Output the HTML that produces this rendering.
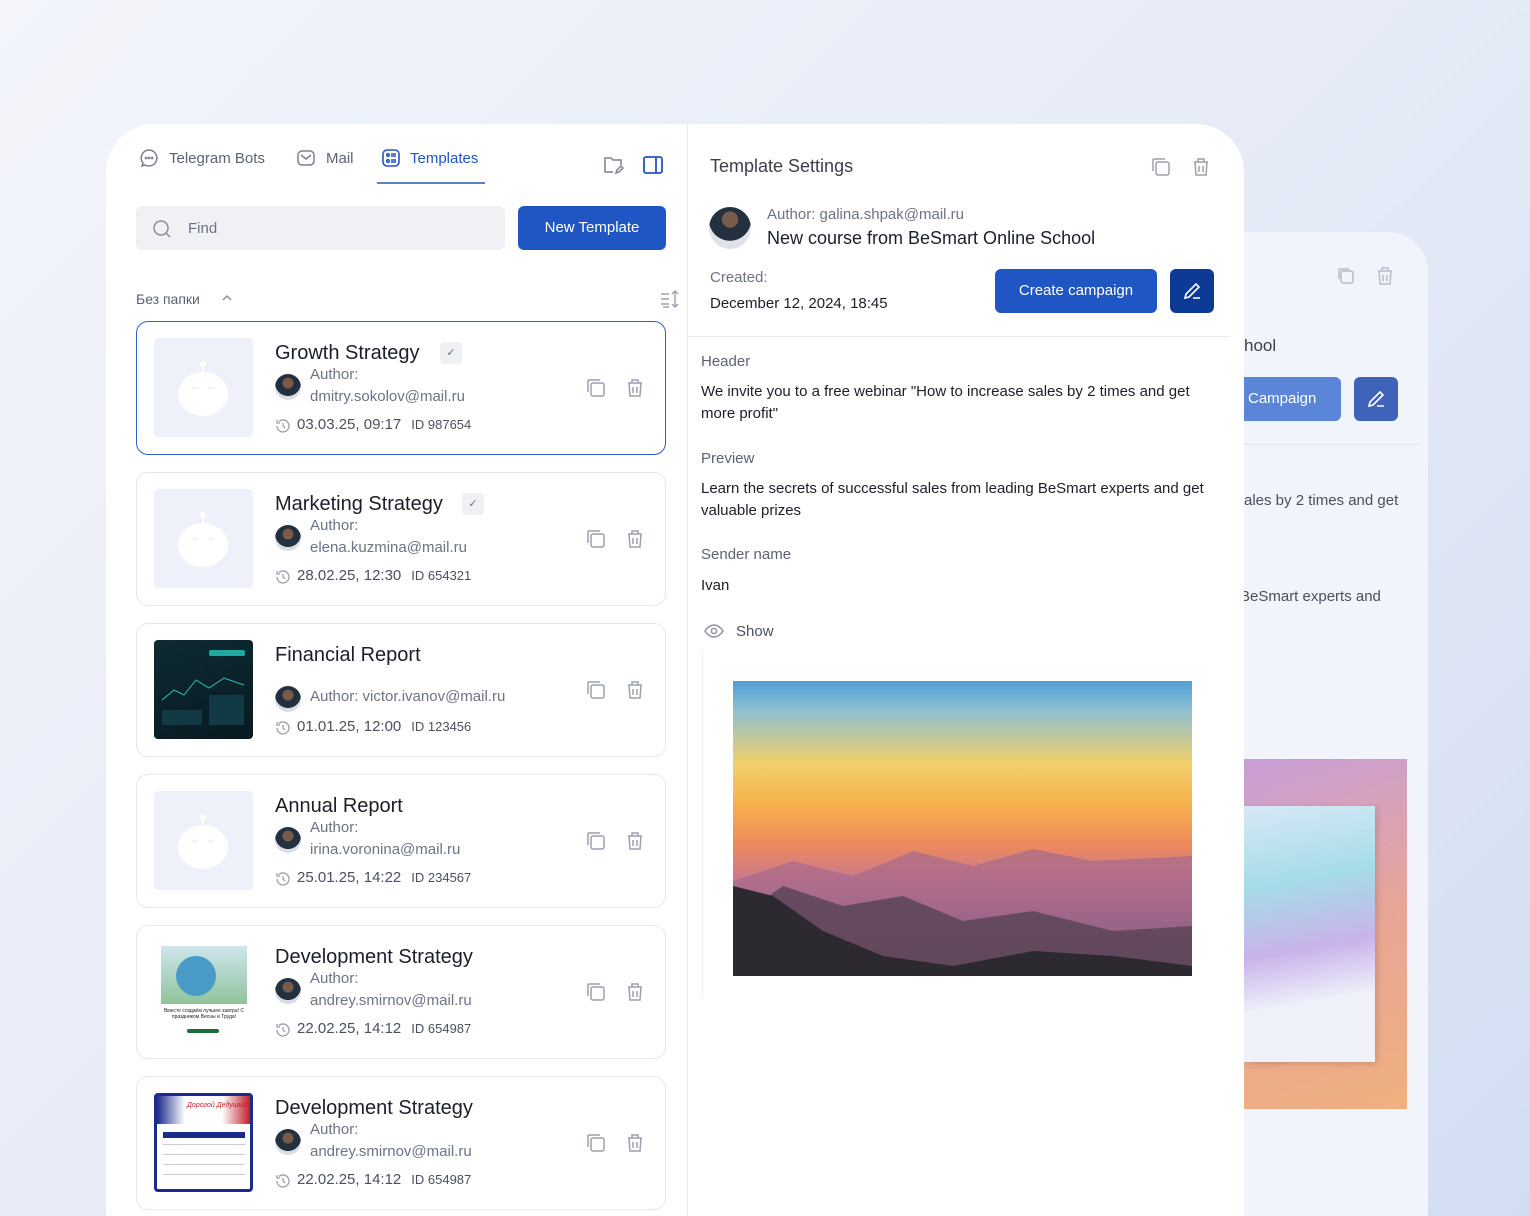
<!DOCTYPE html>
<html><head><meta charset="utf-8"><style>
*{margin:0;padding:0;box-sizing:border-box}
html,body{width:1530px;height:1216px;overflow:hidden}
body{font-family:"Liberation Sans",sans-serif;background:linear-gradient(135deg,#f3f5fb 0%,#e6ebf7 50%,#d3ddf2 100%);position:relative;color:#1b1f2a}
.abs{position:absolute}
.back{left:1180px;top:232px;width:248px;height:984px;background:#f1f4fb;border-radius:40px 40px 0 0}
.main{left:106px;top:124px;width:1138px;height:1092px;background:#fff;border-radius:48px 48px 0 0;overflow:hidden}
.tab{font-size:15px;color:#5b6273;top:150px}
.card{left:136px;width:530px;height:134px;border:1px solid #e3e7ef;border-radius:12px;background:#fff}
.card.sel{border:1.5px solid #2e5fc9}
.thumb{position:absolute;left:17px;top:16px;width:99px;height:99px;background:#eef1f9;border-radius:4px;overflow:hidden}
.title{position:absolute;left:138px;top:20px;font-size:20px;color:#1b1f2a}
.auth{position:absolute;left:173px;font-size:15px;color:#6b7385;line-height:22px}
.date{position:absolute;left:138px;top:94px;font-size:15px;color:#4a5060}
.date small{font-size:13px;margin-left:10px}
.av{position:absolute;left:138px;width:26px;height:26px;border-radius:50%;background:radial-gradient(circle at 50% 35%,#7a5a48 0 25%,#233040 26% 60%,#d9dde3 61%)}
.ic{position:absolute}
.lbl{font-size:15px;color:#5b6273}
.txt{font-size:15px;color:#1b1f2a;line-height:22px}
</style></head><body>
<div class="abs back">
 <svg class="ic" style="left:156px;top:34px" width="20" height="20" viewBox="0 0 20 20" fill="none" stroke="#b6bdcc" stroke-width="1.5"><rect x="5" y="5" width="12" height="12" rx="2"/><path d="M3 13V4a1 1 0 0 1 1-1h9"/></svg>
 <svg class="ic" style="left:196px;top:34px" width="18" height="20" viewBox="0 0 18 20" fill="none" stroke="#b6bdcc" stroke-width="1.5"><path d="M2 5h14M6 5V2h6v3M3 5l1 13h10l1-13M7 9v6M11 9v6"/></svg>
 <div class="abs" style="left:64px;top:104px;font-size:17px;color:#3a3f4c">hool</div>
 <div class="abs" style="left:0;top:145px;width:161px;height:44px;background:#5a85d8;border-radius:6px;color:#fff;font-size:15px;padding:13px 0 0 68px">Campaign</div>
 <div class="abs" style="left:174px;top:145px;width:44px;height:44px;background:#3d64b8;border-radius:6px"><svg style="margin:11px" width="22" height="22" viewBox="0 0 22 22" fill="none" stroke="#fff" stroke-width="1.6"><path d="M4 18l1-4L15 4l3 3L8 17z M12 18h7"/></svg></div>
 <div class="abs" style="left:0;top:212px;width:240px;height:1px;background:#e2e6ee"></div>
 <div class="abs txt" style="left:64px;top:258px;color:#4a5060">ales by 2 times and get</div>
 <div class="abs txt" style="left:60px;top:354px;color:#4a5060">BeSmart experts and</div>
 <div class="abs" style="left:64px;top:527px;width:163px;height:350px;background:linear-gradient(160deg,#c89ed8,#e8a596 50%,#f0b07f)"></div>
 <div class="abs" style="left:64px;top:574px;width:131px;height:256px;background:linear-gradient(170deg,#d8e8f6,#a5dce8 30%,#c9b3ea 55%,#eef1fa 75%);box-shadow:2px 2px 6px rgba(0,0,0,.15)"></div>
</div>
<div class="abs main">
 <div class="abs" style="left:581px;top:0;width:1px;height:1092px;background:#e6e9f0"></div>
</div>
<svg class="ic" style="left:139px;top:148px" width="20" height="20" viewBox="0 0 20 20" fill="none" stroke="#7a8194" stroke-width="1.5"><path d="M10 2a8 8 0 1 1-4 15l-3 1 1-3A8 8 0 0 1 10 2z"/><circle cx="7" cy="10" r=".6" fill="#7a8194"/><circle cx="10" cy="10" r=".6" fill="#7a8194"/><circle cx="13" cy="10" r=".6" fill="#7a8194"/></svg>
<div class="abs tab" style="left:169px">Telegram Bots</div>
<svg class="ic" style="left:296px;top:148px" width="20" height="20" viewBox="0 0 20 20" fill="none" stroke="#7a8194" stroke-width="1.5"><rect x="2" y="3" width="16" height="14" rx="4"/><path d="M5 7l5 4 5-4"/></svg>
<div class="abs tab" style="left:326px">Mail</div>
<svg class="ic" style="left:381px;top:148px" width="20" height="20" viewBox="0 0 20 20" fill="none" stroke="#2453c4" stroke-width="1.6"><rect x="2" y="2" width="16" height="16" rx="4"/><circle cx="7" cy="7" r="1.3"/><circle cx="7" cy="13" r="1.3"/><path d="M10 6h5M10 8h5M10 12h5M10 14h5"/></svg>
<div class="abs tab" style="left:410px;color:#2453c4">Templates</div>
<div class="abs" style="left:377px;top:182px;width:108px;height:2px;background:#5d7fc9"></div>
<svg class="ic" style="left:602px;top:154px" width="22" height="22" viewBox="0 0 22 22" fill="none" stroke="#7a8194" stroke-width="1.5"><path d="M11 18H3V4h6l2 2h8v5"/><path d="M14 19l1-3 4-4 2 2-4 4z"/></svg>
<svg class="ic" style="left:642px;top:154px" width="22" height="22" viewBox="0 0 22 22" fill="none" stroke="#2453c4" stroke-width="1.8"><rect x="2" y="3" width="18" height="16" rx="2"/><path d="M14 3v16"/></svg>
<div class="abs" style="left:136px;top:206px;width:369px;height:44px;background:#eff1f5;border-radius:6px"></div>
<svg class="ic" style="left:152px;top:219px" width="20" height="20" viewBox="0 0 20 20" fill="none" stroke="#8a90a0" stroke-width="1.5"><circle cx="9" cy="9" r="7"/><path d="M14 14l4 4"/></svg>
<div class="abs" style="left:188px;top:220px;font-size:15px;color:#6b7385">Find</div>
<div class="abs" style="left:518px;top:206px;width:148px;height:44px;background:#1f56c3;border-radius:6px;color:#fff;font-size:15px;text-align:center;line-height:44px">New Template</div>
<div class="abs" style="left:136px;top:291px;font-size:14px;color:#5b6273">Без папки</div>
<svg class="ic" style="left:221px;top:293px" width="12" height="10" viewBox="0 0 12 10" fill="none" stroke="#8a90a0" stroke-width="1.5"><path d="M2 7l4-4 4 4"/></svg>
<svg class="ic" style="left:659px;top:289px" width="22" height="20" viewBox="0 0 22 20" fill="none" stroke="#9aa0ae" stroke-width="1.4"><path d="M2 5h8M2 10h8M2 15h8M4 18h6M16 2v16M13 5l3-3 3 3M13 15l3 3 3-3"/></svg>

<div id="cards"></div>

<div class="abs" style="left:710px;top:156px;font-size:18px;color:#3a3f4c">Template Settings</div>
<svg class="ic" style="left:1151px;top:157px" width="20" height="20" viewBox="0 0 20 20" fill="none" stroke="#9aa0ae" stroke-width="1.5"><rect x="5" y="5" width="13" height="13" rx="2"/><path d="M2 14V3a1 1 0 0 1 1-1h11"/></svg>
<svg class="ic" style="left:1192px;top:157px" width="18" height="20" viewBox="0 0 18 20" fill="none" stroke="#9aa0ae" stroke-width="1.5"><path d="M2 5h14M6 5V2h6v3M3 5l1 13h10l1-13M7 9v6M11 9v6"/></svg>
<div class="abs" style="left:709px;top:207px;width:42px;height:42px;border-radius:50%;background:radial-gradient(circle at 50% 30%,#7a5a48 0 22%,#233040 23% 58%,#dfe2e6 59%)"></div>
<div class="abs" style="left:767px;top:206px;font-size:15px;color:#6b7385">Author: galina.shpak@mail.ru</div>
<div class="abs" style="left:767px;top:228px;font-size:18px;color:#1b1f2a">New course from BeSmart Online School</div>
<div class="abs" style="left:710px;top:269px;font-size:15px;color:#6b7385">Created:</div>
<div class="abs" style="left:710px;top:295px;font-size:15px;color:#1b1f2a">December 12, 2024, 18:45</div>
<div class="abs" style="left:995px;top:269px;width:162px;height:44px;background:#1f56c3;border-radius:6px;color:#fff;font-size:15px;text-align:center;line-height:44px">Create campaign</div>
<div class="abs" style="left:1170px;top:269px;width:44px;height:44px;background:#0d3a97;border-radius:6px"><svg style="margin:11px" width="22" height="22" viewBox="0 0 22 22" fill="none" stroke="#fff" stroke-width="1.6"><path d="M4 18l1-4L15 4l3 3L8 17z M12 18h7"/></svg></div>
<div class="abs" style="left:688px;top:336px;width:542px;height:1px;background:#e6e9f0"></div>
<div class="abs lbl" style="left:701px;top:353px">Header</div>
<div class="abs txt" style="left:701px;top:381px;width:518px">We invite you to a free webinar "How to increase sales by 2 times and get more profit"</div>
<div class="abs lbl" style="left:701px;top:450px">Preview</div>
<div class="abs txt" style="left:701px;top:478px;width:505px">Learn the secrets of successful sales from leading BeSmart experts and get valuable prizes</div>
<div class="abs lbl" style="left:701px;top:546px">Sender name</div>
<div class="abs txt" style="left:701px;top:575px">Ivan</div>
<svg class="ic" style="left:704px;top:623px" width="20" height="16" viewBox="0 0 20 16" fill="none" stroke="#8a90a0" stroke-width="1.4"><path d="M1 8s3.5-6 9-6 9 6 9 6-3.5 6-9 6-9-6-9-6z"/><circle cx="10" cy="8" r="2.6"/></svg>
<div class="abs" style="left:736px;top:623px;font-size:15px;color:#4a5060">Show</div>
<div class="abs" style="left:702px;top:652px;width:1px;height:345px;background:#eef0f4"></div>
<div class="abs" style="left:733px;top:681px;width:459px;height:295px;overflow:hidden;background:linear-gradient(180deg,#4f9fd6 0%,#8ec0d0 10%,#f2d06a 28%,#f6b14c 42%,#ee8a5c 55%,#c87890 68%,#8a5f86 80%,#3a3440 100%)">
 <svg width="459" height="295" viewBox="0 0 459 295" style="position:absolute;left:0;top:0"><path d="M0 200 L60 180 120 195 180 170 240 185 300 168 360 180 459 175 V295H0z" fill="#a76a8a" opacity=".7"/><path d="M0 240 L50 205 110 225 170 215 230 240 300 230 380 250 459 245 V295H0z" fill="#5b4458" opacity=".85"/><path d="M0 205 L40 215 90 250 150 275 220 285 300 270 380 275 459 285 V295H0z" fill="#2c2a30"/></svg>
</div>

<script>
var d=[["Growth Strategy",1,"dmitry.sokolov@mail.ru","03.03.25, 09:17","987654",0],["Marketing Strategy",1,"elena.kuzmina@mail.ru","28.02.25, 12:30","654321",0],["Financial Report",0,"victor.ivanov@mail.ru","01.01.25, 12:00","123456",1],["Annual Report",0,"irina.voronina@mail.ru","25.01.25, 14:22","234567",0],["Development Strategy",0,"andrey.smirnov@mail.ru","22.02.25, 14:12","654987",2],["Development Strategy",0,"andrey.smirnov@mail.ru","22.02.25, 14:12","654987",3]];
var h="";
d.forEach(function(c,i){
var top=321+i*151;
var th;
if(c[5]==0) th='<div class="thumb"><svg width="99" height="99" viewBox="0 0 99 99"><circle cx="49" cy="26" r="3" fill="#fff"/><rect x="48" y="27" width="2" height="8" fill="#fff"/><ellipse cx="49" cy="56" rx="25" ry="22" fill="#fff"/><path d="M38 51q3-3 6 0M54 51q3-3 6 0" stroke="#eef1f9" stroke-width="2" fill="none"/></svg></div>';
else if(c[5]==1) th='<div class="thumb" style="background:linear-gradient(160deg,#0e2a33,#081a22);"><div style="position:absolute;left:55px;top:10px;width:36px;height:6px;background:#1fa9a0;border-radius:2px"></div><svg width="99" height="99"><path d="M8 60 L20 50 30 55 42 40 55 48 70 38 90 45" stroke="#2bc0b4" fill="none" stroke-width="1"/><rect x="8" y="70" width="40" height="15" fill="#113a44"/><rect x="55" y="55" width="35" height="30" fill="#113a44"/></svg></div>';
else if(c[5]==2) th='<div class="thumb" style="background:#fff"><div style="position:absolute;left:7px;top:4px;width:86px;height:58px;background:linear-gradient(180deg,#cfe6ee,#8fc39a)"></div><div style="position:absolute;left:22px;top:14px;width:40px;height:40px;border-radius:50%;background:#4a9ac8"></div><div style="position:absolute;left:8px;top:66px;width:84px;font-size:5px;text-align:center;color:#222">Вместе создаём лучшее завтра! С праздником Весны и Труда!</div><div style="position:absolute;left:33px;top:87px;width:32px;height:4px;background:#1e6b3a;border-radius:2px"></div></div>';
else th='<div class="thumb" style="background:#fff;border:3px solid #1c2a8c"><div style="position:absolute;left:0;top:0;width:93px;height:28px;background:linear-gradient(90deg,#1c2a8c,#fff 30%,#fff 70%,#c21e2a)"></div><div style="position:absolute;left:30px;top:6px;font-size:7px;color:#c21e2a;font-style:italic">Дорогой Дедушка</div><div style="position:absolute;left:6px;top:36px;width:82px;height:6px;background:#1c2a8c"></div><div style="position:absolute;left:6px;top:48px;width:82px;height:40px;background:repeating-linear-gradient(180deg,#ccd 0 1px,#fff 1px 10px)"></div></div>';
var auth = c[5]==1 ? '<div class="auth" style="top:62px">Author: '+c[2]+'</div><div class="av" style="top:62px"></div>' : '<div class="auth" style="top:42px">Author:<br>'+c[2]+'</div><div class="av" style="top:52px"></div>';
var chk = c[1] ? '<div style="position:absolute;left:'+(c[0]=="Growth Strategy"?303:325)+'px;top:20px;width:22px;height:22px;background:#eef0f4;border-radius:4px;font-size:11px;color:#6b7385;text-align:center;line-height:22px">✓</div>' : '';
h+='<div class="abs card'+(i==0?' sel':'')+'" style="top:'+top+'px">'+th+'<div class="title">'+c[0]+'</div>'+chk+auth+
'<svg style="position:absolute;left:138px;top:96px" width="16" height="16" viewBox="0 0 16 16" fill="none" stroke="#9aa0ae" stroke-width="1.3"><path d="M2 8a6 6 0 1 0 2-4.5M2 2v3h3M8 5v3l2 2"/></svg>'+
'<div class="date" style="left:160px">'+c[3]+'<small>ID '+c[4]+'</small></div>'+
'<svg style="position:absolute;left:449px;top:56px" width="20" height="20" viewBox="0 0 20 20" fill="none" stroke="#9aa0ae" stroke-width="1.5"><rect x="5" y="5" width="13" height="13" rx="2"/><path d="M2 14V3a1 1 0 0 1 1-1h11"/></svg>'+
'<svg style="position:absolute;left:489px;top:56px" width="18" height="20" viewBox="0 0 18 20" fill="none" stroke="#9aa0ae" stroke-width="1.5"><path d="M2 5h14M6 5V2h6v3M3 5l1 13h10l1-13M7 9v6M11 9v6"/></svg></div>';
});
document.getElementById("cards").outerHTML=h;
</script>
</body></html>
